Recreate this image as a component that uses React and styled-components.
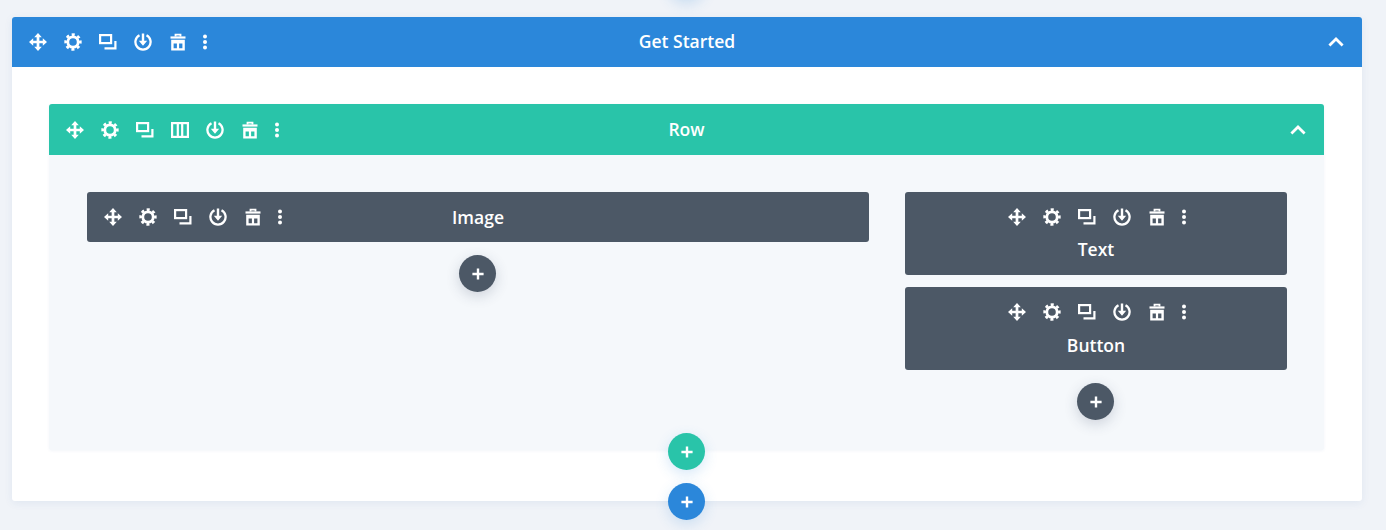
import React from "react";
import styled, { createGlobalStyle } from "styled-components";

const GlobalStyle = createGlobalStyle`
  html, body {
    margin: 0;
    height: 530px;
    overflow: hidden;
    background: #f0f3f8;
  }
`;

const Page = styled.div`
  position: relative;
  height: 530px;
  padding: 17px 24px 0 12px;
  box-sizing: border-box;
  font-family: "Open Sans", "Liberation Sans", sans-serif;
`;

const Section = styled.section`
  position: relative;
  height: 484px;
  background: #fff;
  border-radius: 3px;
  box-shadow: 0 2px 8px rgba(43, 87, 151, 0.08);
`;

// Bars and modules share this three column header
const Bar = styled.header`
  display: grid;
  grid-template-columns: 1fr auto 1fr;
  align-items: center;
  height: ${(p) => p.$height}px;
  background: ${(p) => p.$color};
  border-radius: ${(p) => (p.$all ? "3px" : "3px 3px 0 0")};
  color: #fff;
`;

const Title = styled.span`
  font-size: 17.5px;
  font-weight: 600;
  line-height: 24px;
  color: #fff;
  position: relative;
  top: ${(p) => p.$nudge || 0}px;
`;

const Tools = styled.div`
  display: flex;
  align-items: center;
  justify-content: ${(p) => (p.$center ? "center" : "flex-start")};
  padding-left: ${(p) => (p.$center ? 0 : 8.5)}px;
`;

const Tool = styled.span`
  display: flex;
  align-items: center;
  justify-content: center;
  width: ${(p) => (p.$narrow ? 19 : 35)}px;
  height: 20px;
  svg {
    display: block;
  }
`;

const Chevron = styled.span`
  justify-self: end;
  display: flex;
  margin-right: 17px;
`;

const RowBox = styled.div`
  position: relative;
  margin: 0 38px 0 37px;
  height: 346px;
  background: #f5f8fb;
  border-radius: 3px;
  box-shadow: 0 1px 3px rgba(43, 87, 151, 0.06);
`;

const SectionBody = styled.div`
  padding-top: 37px;
`;

const Columns = styled.div`
  display: grid;
  grid-template-columns: 782px 382px;
  column-gap: 36px;
  padding: 37px 37px 0 38px;
`;

const Column = styled.div`
  display: flex;
  flex-direction: column;
  align-items: center;
  gap: 12px;
`;

const StackedModule = styled.div`
  align-self: stretch;
  height: 83px;
  box-sizing: border-box;
  padding-top: 15px;
  background: #4c5866;
  border-radius: 3px;
  display: flex;
  flex-direction: column;
  align-items: center;
  gap: 10px;
`;

const WideModule = styled.div`
  align-self: stretch;
`;

const AddButton = styled.button`
  width: 37px;
  height: 37px;
  padding: 0;
  border: 0;
  border-radius: 50%;
  background: ${(p) => p.$color};
  display: flex;
  align-items: center;
  justify-content: center;
  flex: none;
  box-shadow: 0 4px 14px ${(p) => p.$glow};
`;

const ColumnAdd = styled(AddButton)`
  margin: 1px 1px 0 0;
`;

const FloatingAdd = styled(AddButton)`
  position: absolute;
  left: 50%;
  margin-left: ${(p) => p.$shift}px;
  bottom: ${(p) => p.$bottom}px;
  z-index: 2;
`;

const TopGlow = styled(AddButton)`
  position: absolute;
  left: 668px;
  top: -37px;
`;

const Icon = ({ children, vb = 18 }) => (
  <svg width={vb} height="18" viewBox={`0 0 ${vb} 18`} fill="none">
    {children}
  </svg>
);

const MoveIcon = () => (
  <Icon>
    <path d="M9 2v14M2 9h14" stroke="#fff" strokeWidth="2.7" />
    <path
      d="M9 0l3.8 4.2H5.2zM9 18l3.8-4.2H5.2zM0 9l4.2-3.8v7.6zM18 9l-4.2-3.8v7.6z"
      fill="#fff"
    />
  </Icon>
);

const GearIcon = () => (
  <Icon>
    <circle cx="9" cy="9" r="5.2" stroke="#fff" strokeWidth="2.8" />
    <circle
      cx="9"
      cy="9"
      r="7.4"
      stroke="#fff"
      strokeWidth="2.6"
      strokeDasharray="3 2.81"
      transform="rotate(-11.6 9 9)"
    />
  </Icon>
);

const CopyIcon = () => (
  <Icon>
    <rect x="1.1" y="2.1" width="11" height="8" stroke="#fff" strokeWidth="2.2" />
    <path d="M16.4 8v7.4H5.5" stroke="#fff" strokeWidth="2.2" />
  </Icon>
);

const ColumnsIcon = () => (
  <Icon>
    <rect x="1.1" y="2.1" width="15.8" height="13.8" stroke="#fff" strokeWidth="2.2" />
    <path d="M6.8 2v14M11.2 2v14" stroke="#fff" strokeWidth="2.2" />
  </Icon>
);

const SaveIcon = () => (
  <Icon>
    <path d="M5.5 2.2a7.6 7.6 0 1 0 7 0" stroke="#fff" strokeWidth="2.3" />
    <path d="M7.8 0.5h2.4v7.2H13.2L9 12.8 4.8 7.7h3z" fill="#fff" />
  </Icon>
);

const TrashIcon = () => (
  <Icon>
    <path d="M1.5 4.5h15" stroke="#fff" strokeWidth="2.2" />
    <path d="M6.5 3.4V1.6h5v1.8" stroke="#fff" strokeWidth="1.8" />
    <path
      fillRule="evenodd"
      d="M2.2 6.8h13.6v10.7H2.2zM4.6 10.4v4.9h3.3v-4.9zM10.1 10.4v4.9h3.3v-4.9z"
      fill="#fff"
    />
  </Icon>
);

const DotsIcon = () => (
  <Icon vb={6}>
    <circle cx="3" cy="3.5" r="2" fill="#fff" />
    <circle cx="3" cy="9" r="2" fill="#fff" />
    <circle cx="3" cy="14.5" r="2" fill="#fff" />
  </Icon>
);

const ChevronIcon = () => (
  <svg width="18" height="12" viewBox="0 0 18 12" fill="none">
    <path d="M2.4 9.4L9 3l6.6 6.4" stroke="#fff" strokeWidth="2.8" />
  </svg>
);

const PlusIcon = () => (
  <svg width="14" height="14" viewBox="0 0 14 14" fill="none">
    <path d="M7 1.4v11.2M1.4 7h11.2" stroke="#fff" strokeWidth="2.4" />
  </svg>
);

const Toolbar = ({ withColumns, center }) => (
  <Tools $center={center}>
    <Tool><MoveIcon /></Tool>
    <Tool><GearIcon /></Tool>
    <Tool><CopyIcon /></Tool>
    {withColumns && <Tool><ColumnsIcon /></Tool>}
    <Tool><SaveIcon /></Tool>
    <Tool><TrashIcon /></Tool>
    <Tool $narrow><DotsIcon /></Tool>
  </Tools>
);

const Stacked = ({ title, nudge }) => (
  <StackedModule>
    <Toolbar center />
    <Title $nudge={nudge}>{title}</Title>
  </StackedModule>
);

const GLOW_BLUE = "rgba(43, 135, 218, 0.2)";
const GLOW_DARK = "rgba(43, 60, 90, 0.2)";

export default function App() {
  return (
    <>
      <GlobalStyle />
      <Page>
        <TopGlow $color="#2b87da" $glow={GLOW_BLUE} />
        <Section>
          <Bar $height={50} $color="#2b87da">
            <Toolbar />
            <Title $nudge={-1}>Get Started</Title>
            <Chevron><ChevronIcon /></Chevron>
          </Bar>
          <SectionBody>
            <RowBox>
              <Bar $height={51} $color="#29c4a9">
                <Toolbar withColumns />
                <Title $nudge={-1}>Row</Title>
                <Chevron><ChevronIcon /></Chevron>
              </Bar>
              <Columns>
                <Column>
                  <WideModule>
                    <Bar $height={50} $color="#4c5866" $all>
                      <Toolbar />
                      <Title>Image</Title>
                      <span />
                    </Bar>
                  </WideModule>
                  <ColumnAdd $color="#4c5866" $glow={GLOW_DARK}>
                    <PlusIcon />
                  </ColumnAdd>
                </Column>
                <Column>
                  <Stacked title="Text" />
                  <Stacked title="Button" nudge={1} />
                  <ColumnAdd $color="#4c5866" $glow={GLOW_DARK}>
                    <PlusIcon />
                  </ColumnAdd>
                </Column>
              </Columns>
              <FloatingAdd $bottom={-20} $shift={-18.5} $color="#29c4a9" $glow={GLOW_BLUE}>
                <PlusIcon />
              </FloatingAdd>
            </RowBox>
          </SectionBody>
          <FloatingAdd $bottom={-19} $shift={-19} $color="#2b87da" $glow={GLOW_BLUE}>
            <PlusIcon />
          </FloatingAdd>
        </Section>
      </Page>
    </>
  );
}
